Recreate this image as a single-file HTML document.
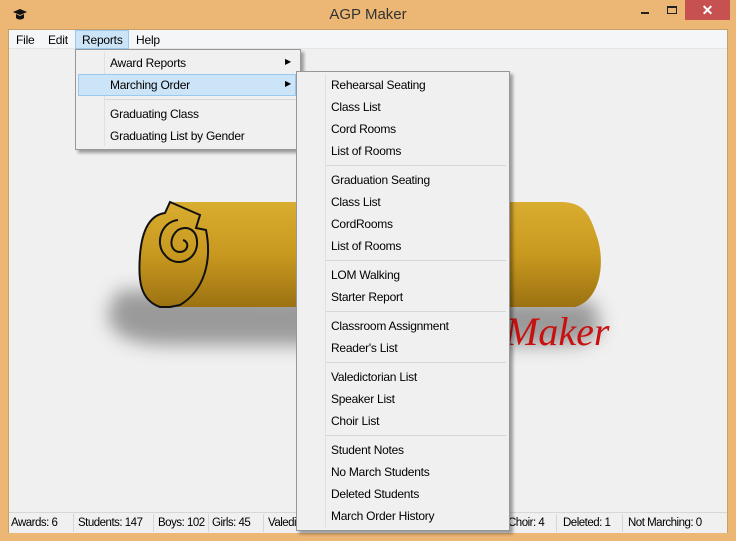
<!DOCTYPE html><html><head><style>
*{margin:0;padding:0;box-sizing:border-box}
body{width:736px;height:541px;background:#ecb674;position:relative;overflow:hidden;font-family:"Liberation Sans",sans-serif;font-size:12px;color:#000}
.abs{position:absolute}
.title{left:0;top:0;width:736px;height:29px;text-align:center;line-height:29px;font-size:15px;color:#333}
.client{left:8px;top:29px;width:720px;height:504px;background:#f0f0f0;border:1px solid #c9a06a}
.menubar{left:9px;top:30px;width:718px;height:19px;background:#f5f6f7;border-bottom:1px solid #e5e5e5}
.mi{top:33px;font-size:12px;letter-spacing:-0.2px}
.menu{background:#f0f0f0;border:1px solid #979797;box-shadow:3px 3px 3px rgba(0,0,0,.35)}
.it{position:absolute;font-size:12px;letter-spacing:-0.25px}
.sep{position:absolute;height:1px;background:#d7d7d7}
.status{left:9px;top:512px;width:718px;height:21px;border-top:1px solid #d7d7d7;background:#f0f0f0}
.st{position:absolute;top:517px;font-size:11.5px;letter-spacing:-0.5px}
.sd{position:absolute;top:514px;width:1px;height:18px;background:#d7d7d7}
</style></head><body>
<div class="abs title">AGP Maker</div>
<svg class="abs" style="left:12px;top:7px" width="16" height="14"><path d="M1 5L8 2L15 5L8 8Z" fill="#111"/><path d="M4 7v4c2 2 6 2 8 0V7L8 9Z" fill="#111"/></svg>
<div class="abs" style="left:641px;top:12px;width:8px;height:2px;background:#222"></div>
<div class="abs" style="left:667px;top:6px;width:10px;height:8px;border:1px solid #222;border-top-width:2px"></div>
<div class="abs" style="left:685px;top:0;width:45px;height:20px;background:#c75050;color:#fff;text-align:center;line-height:20px;font-size:14px;font-weight:bold">✕</div>
<div class="abs client"></div>
<div class="abs menubar"></div>
<div class="abs" style="left:75px;top:30px;width:54px;height:19px;background:#cce4f7;border:1px solid #99c9ef"></div>
<div class="abs mi" style="left:16px">File</div>
<div class="abs mi" style="left:48px">Edit</div>
<div class="abs mi" style="left:82px">Reports</div>
<div class="abs mi" style="left:136px">Help</div>

<svg class="abs" style="left:0;top:0" width="736" height="541">
<defs><linearGradient id="g" x1="0" y1="0" x2="0" y2="1"><stop offset="0" stop-color="#d9ad30"/><stop offset=".5" stop-color="#c8991f"/><stop offset="1" stop-color="#9c7212"/></linearGradient>
<filter id="b" x="-50%" y="-50%" width="200%" height="200%"><feGaussianBlur stdDeviation="9"/></filter></defs>
<path d="M120 290C95 320 110 345 170 345L560 345C600 345 610 330 590 300Z" fill="#555" opacity=".55" filter="url(#b)"/>
<path d="M170 202L560 202C585 202 590 215 598 240C605 265 600 300 575 307L170 307Z" fill="url(#g)"/>
<path d="M170 202L200 215L196 228L206 230C212 260 205 290 180 305L170 307L160 307C140 300 138 280 140 255C142 230 150 215 165 213Z" fill="url(#g)" stroke="#111" stroke-width="2"/>
<path d="M178 220C160 222 155 245 165 255C175 268 195 262 197 245C198 230 188 225 178 230C168 238 170 252 180 252C188 252 190 242 183 240" fill="none" stroke="#111" stroke-width="2"/>
<text x="505" y="345" font-family="Liberation Serif,serif" font-style="italic" font-size="40" fill="#c81010">Maker</text>
</svg>

<div class="abs menu" style="left:75px;top:49px;width:226px;height:101px"></div>
<div class="abs" style="left:104px;top:52px;width:1px;height:94px;background:#e0e0e0"></div>
<div class="abs" style="left:78px;top:74px;width:218px;height:22px;background:#cce4f7;border:1px solid #99c9ef"></div>
<div class="it" style="left:110px;top:56px">Award Reports</div>
<div class="it" style="left:110px;top:78px">Marching Order</div>
<div class="it" style="left:285px;top:57px;font-size:8px">▶</div>
<div class="it" style="left:285px;top:79px;font-size:8px">▶</div>
<div class="sep" style="left:105px;top:99px;width:191px"></div>
<div class="it" style="left:110px;top:107px">Graduating Class</div>
<div class="it" style="left:110px;top:129px">Graduating List by Gender</div>

<div class="abs status"></div>
<div class="st" style="left:11px">Awards: 6</div><div class="sd" style="left:73px"></div>
<div class="st" style="left:78px">Students: 147</div><div class="sd" style="left:153px"></div>
<div class="st" style="left:158px">Boys: 102</div><div class="sd" style="left:208px"></div>
<div class="st" style="left:212px">Girls: 45</div><div class="sd" style="left:263px"></div>
<div class="st" style="left:268px">Valedi</div>
<div class="st" style="left:508px">Choir: 4</div><div class="sd" style="left:556px"></div>
<div class="st" style="left:563px">Deleted: 1</div><div class="sd" style="left:622px"></div>
<div class="st" style="left:628px">Not Marching: 0</div>

<div class="abs menu" style="left:296px;top:71px;width:214px;height:460px"></div>
<div class="abs" style="left:325px;top:74px;width:1px;height:453px;background:#e0e0e0"></div>
<div class="it" style="left:331px;top:78px">Rehearsal Seating</div>
<div class="it" style="left:331px;top:100px">Class List</div>
<div class="it" style="left:331px;top:122px">Cord Rooms</div>
<div class="it" style="left:331px;top:144px">List of Rooms</div>
<div class="sep" style="left:326px;top:165px;width:180px"></div>
<div class="it" style="left:331px;top:173px">Graduation Seating</div>
<div class="it" style="left:331px;top:195px">Class List</div>
<div class="it" style="left:331px;top:217px">CordRooms</div>
<div class="it" style="left:331px;top:239px">List of Rooms</div>
<div class="sep" style="left:326px;top:260px;width:180px"></div>
<div class="it" style="left:331px;top:268px">LOM Walking</div>
<div class="it" style="left:331px;top:290px">Starter Report</div>
<div class="sep" style="left:326px;top:311px;width:180px"></div>
<div class="it" style="left:331px;top:319px">Classroom Assignment</div>
<div class="it" style="left:331px;top:341px">Reader's List</div>
<div class="sep" style="left:326px;top:362px;width:180px"></div>
<div class="it" style="left:331px;top:370px">Valedictorian List</div>
<div class="it" style="left:331px;top:392px">Speaker List</div>
<div class="it" style="left:331px;top:414px">Choir List</div>
<div class="sep" style="left:326px;top:435px;width:180px"></div>
<div class="it" style="left:331px;top:443px">Student Notes</div>
<div class="it" style="left:331px;top:465px">No March Students</div>
<div class="it" style="left:331px;top:487px">Deleted Students</div>
<div class="it" style="left:331px;top:509px">March Order History</div>
</body></html>
